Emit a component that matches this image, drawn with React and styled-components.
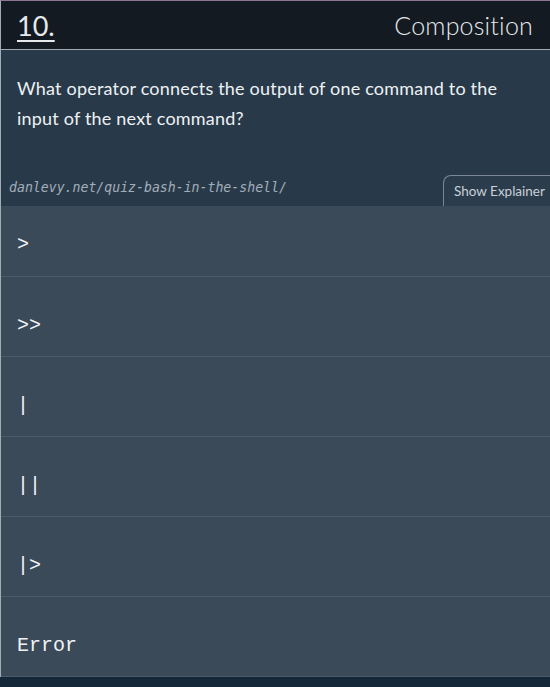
import React from 'react'
import styled, { createGlobalStyle } from 'styled-components'

const options = [
  { id: 1, label: '>' },
  { id: 2, label: '>>' },
  { id: 3, label: '|' },
  { id: 4, label: '||' },
  { id: 5, label: '|>' },
  { id: 6, label: 'Error' },
]

const GlobalStyle = createGlobalStyle`
  html, body {
    margin: 0;
    padding: 0;
    background: #15283a;
  }
`

function App() {
  return (
    <>
      <GlobalStyle />
      <Card>
        <Header>
          <Number>10.</Number>
          <Category>Composition</Category>
        </Header>
        <Question>
          <Prompt>
            What operator connects the output of one command to the input of the next command?
          </Prompt>
          <QuestionFooter>
            <SourceLink>danlevy.net/quiz-bash-in-the-shell/</SourceLink>
            <ExplainerButton>Show Explainer</ExplainerButton>
          </QuestionFooter>
        </Question>
        <OptionList>
          {options.map((item, i) => (
            <Option key={item.id} first={i === 0}>
              {item.label}
            </Option>
          ))}
        </OptionList>
      </Card>
    </>
  )
}

export default App

const Card = styled.div`
  width: 550px;
  box-sizing: border-box;
  border-top: 1px solid #8d7492;
  border-left: 1px solid #a3abb3;
  font-family: Lato, "Open Sans", sans-serif;
`

const Header = styled.div`
  height: 49px;
  box-sizing: border-box;
  background: #131a21;
  border-bottom: 1px solid #a1aab3;
  display: flex;
  align-items: center;
  justify-content: space-between;
  padding: 0 17px 0 16px;
`

const Number = styled.span`
  font-size: 27px;
  font-weight: 400;
  color: #e6e9ec;
  text-decoration: underline;
  text-decoration-thickness: 2px;
  text-underline-offset: 4px;
`

const Category = styled.span`
  font-size: 25px;
  font-weight: 300;
  color: #e6e9ec;
  letter-spacing: 0.2px;
`

const Question = styled.div`
  height: 156px;
  box-sizing: border-box;
  background: #283a4a;
  display: flex;
  flex-direction: column;
  justify-content: space-between;
`

const Prompt = styled.p`
  margin: 0;
  padding: 23px 40px 0 16px;
  font-size: 18px;
  line-height: 30px;
  color: #eef1f3;
  letter-spacing: 0.2px;
`

const QuestionFooter = styled.div`
  display: flex;
  align-items: flex-end;
  justify-content: space-between;
`

const SourceLink = styled.span`
  padding: 0 0 11px 8px;
  font-family: "DejaVu Sans Mono", "Liberation Mono", monospace;
  font-style: italic;
  font-size: 13.2px;
  color: #a3aeb9;
`

const ExplainerButton = styled.button`
  height: 31px;
  width: 107px;
  box-sizing: border-box;
  padding: 0 0 0 10px;
  text-align: left;
  background: #2b3d4d;
  border: 1px solid #7b8794;
  border-right: none;
  border-bottom: none;
  border-top-left-radius: 8px;
  color: #c9d0d7;
  font-family: Lato, "Open Sans", sans-serif;
  font-size: 13.5px;
`

const OptionList = styled.div`
  background: #3a4a58;
`

const Option = styled.div`
  height: ${(p) => (p.first ? '71px' : '80px')};
  box-sizing: border-box;
  border-bottom: 1px solid #4b5b69;
  display: flex;
  align-items: center;
  padding: ${(p) => (p.first ? '7px 16px 0' : '18px 16px 0')};
  font-family: "Liberation Mono", "DejaVu Sans Mono", monospace;
  font-size: 20px;
  color: #f0f3f5;
`
